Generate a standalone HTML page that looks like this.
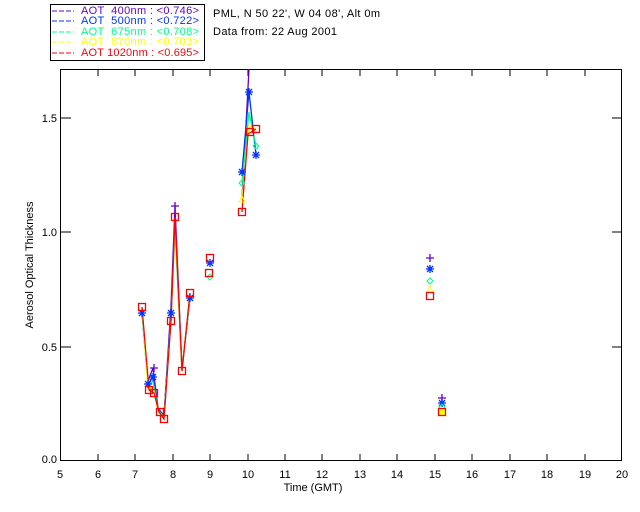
<!DOCTYPE html>
<html><head><style>
body{margin:0;background:#fff;width:640px;height:512px;overflow:hidden}
svg{display:block}
text{font-family:"Liberation Sans",sans-serif;font-size:11px;white-space:pre}
</style></head><body>
<svg width="640" height="512" viewBox="0 0 640 512">
<defs>
<g id="sq"><rect x="-3.5" y="-3.5" width="7" height="7" fill="none" stroke="#f00" stroke-width="1.3"/></g>
<g id="sqf"><rect x="-3.5" y="-3.5" width="7" height="7" fill="#ff0" stroke="#f00" stroke-width="1.3"/></g>
<g id="pl"><path d="M-4 0H4M0 -4V4" stroke="#60c" stroke-width="1.3"/></g>
<g id="st"><path d="M-4 0H4M0 -4V4M-3 -3L3 3M-3 3L3 -3" stroke="#03f" stroke-width="1.3"/></g>
<g id="di"><path d="M0 -3L3 0L0 3L-3 0Z" fill="none" stroke="#0f8" stroke-width="1"/></g>
<g id="tr"><path d="M0 -4L3 2H-3Z" fill="none" stroke="#ff0" stroke-width="1"/></g>
</defs>
<!-- legend -->
<rect x="50.5" y="4.5" width="154" height="56" fill="#fff" stroke="#000"/>
<g font-size="11">
<line x1="52" y1="11" x2="74" y2="11" stroke="#60c" stroke-dasharray="5,2"/><text x="81" y="14" fill="#60c" textLength="118" lengthAdjust="spacing">AOT  400nm : &lt;0.746&gt;</text>
<line x1="52" y1="21" x2="74" y2="21" stroke="#03f" stroke-dasharray="5,2"/><text x="81" y="24" fill="#03f" textLength="118" lengthAdjust="spacing">AOT  500nm : &lt;0.722&gt;</text>
<line x1="52" y1="32" x2="74" y2="32" stroke="#0f8" stroke-dasharray="5,2"/><text x="81" y="35" fill="#0f8" textLength="118" lengthAdjust="spacing">AOT  675nm : &lt;0.708&gt;</text>
<line x1="52" y1="42" x2="74" y2="42" stroke="#ff0" stroke-dasharray="5,2"/><text x="81" y="45" fill="#ff0" textLength="118" lengthAdjust="spacing">AOT  870nm : &lt;0.703&gt;</text>
<line x1="52" y1="53" x2="74" y2="53" stroke="#f00" stroke-dasharray="5,2"/><text x="81" y="56" fill="#f00" textLength="118" lengthAdjust="spacing">AOT 1020nm : &lt;0.695&gt;</text>
</g>
<text x="213" y="17" textLength="167" lengthAdjust="spacing">PML, N 50 22', W 04 08', Alt 0m</text>
<text x="213" y="35" textLength="124" lengthAdjust="spacing">Data from: 22 Aug 2001</text>
<!-- axes -->
<rect x="60.5" y="69.5" width="561" height="391" fill="none" stroke="#000"/>
<g stroke="#000">
<path d="M98 461v-7M135 461v-7M173 461v-7M210 461v-7M248 461v-7M285 461v-7M322 461v-7M360 461v-7M397 461v-7M435 461v-7M472 461v-7M510 461v-7M547 461v-7M585 461v-7"/>
<path d="M98 69v7M135 69v7M173 69v7M210 69v7M248 69v7M285 69v7M322 69v7M360 69v7M397 69v7M435 69v7M472 69v7M510 69v7M547 69v7M585 69v7"/>
<path d="M61 347h10M61 232h10M61 118h10M622 347h-10M622 232h-10M622 118h-10"/>
</g>
<g font-size="10" text-anchor="middle">
<text x="60" y="478">5</text><text x="98" y="478">6</text><text x="135" y="478">7</text><text x="173" y="478">8</text><text x="210" y="478">9</text><text x="248" y="478">10</text><text x="285" y="478">11</text><text x="322" y="478">12</text><text x="360" y="478">13</text><text x="397" y="478">14</text><text x="435" y="478">15</text><text x="472" y="478">16</text><text x="510" y="478">17</text><text x="547" y="478">18</text><text x="585" y="478">19</text><text x="622" y="478">20</text>
<text x="313" y="491">Time (GMT)</text>
</g>
<g font-size="10" text-anchor="end">
<text x="57" y="463">0.0</text><text x="57" y="351">0.5</text><text x="57" y="236">1.0</text><text x="57" y="122">1.5</text>
</g>
<text font-size="10" transform="translate(33,265) rotate(-90)" text-anchor="middle">Aerosol Optical Thickness</text>
<!-- series lines -->
<g fill="none" stroke-width="1.3">
<polyline stroke="#60c" points="142,312 148,381 153,368 158,408 164,416 171,306 175,206 182,369 190,297"/>
<polyline stroke="#60c" points="242,200 249,69"/>
<polyline stroke="#03f" points="142,313 148,384 153,377 158,410 164,415 171,313 175,222 182,370 190,298"/>
<polyline stroke="#03f" points="242,172 249,92 256,155"/>
<polyline stroke="#0f8" points="142,310 148,387 153,381 158,410 164,417 171,320 175,230 182,370 190,296"/>
<polyline stroke="#0f8" points="242,183 249,112 256,146"/>
<polyline stroke="#ff0" points="142,308 148,389 153,388 158,411 164,418 171,321 175,225 182,371 190,294"/>
<polyline stroke="#ff0" points="242,200 249,125 256,130"/>
<polyline stroke="#f00" points="142,307 149,390 154,393 159,412 164,419 171,321 175,217 182,371 190,293"/>
<polyline stroke="#f00" points="242,212 248,134 256,129"/>
</g>
<!-- markers -->
<use href="#pl" x="175" y="206"/><use href="#pl" x="154" y="368"/><use href="#pl" x="430" y="258"/><use href="#pl" x="442" y="398"/>
<use href="#st" x="142" y="313"/><use href="#st" x="148" y="384"/><use href="#st" x="153" y="377"/><use href="#st" x="171" y="313"/><use href="#st" x="190" y="298"/><use href="#st" x="210" y="263"/><use href="#st" x="242" y="172"/><use href="#st" x="249" y="92"/><use href="#st" x="256" y="155"/><use href="#st" x="430" y="269"/><use href="#st" x="442" y="403"/>
<use href="#di" x="242" y="183"/><use href="#di" x="256" y="146"/><use href="#di" x="430" y="281"/><use href="#di" x="442" y="407"/><use href="#di" x="210" y="277"/>
<use href="#tr" x="242" y="200"/><use href="#tr" x="430" y="290"/>
<use href="#sq" x="142" y="307"/><use href="#sq" x="149" y="390"/><use href="#sq" x="154" y="393"/><use href="#sq" x="160" y="412"/><use href="#sq" x="164" y="419"/><use href="#sq" x="171" y="321"/><use href="#sq" x="175" y="217"/><use href="#sq" x="182" y="371"/><use href="#sq" x="190" y="293"/><use href="#sq" x="210" y="258"/><use href="#sq" x="209" y="273"/><use href="#sq" x="242" y="212"/><use href="#sq" x="250" y="132"/><use href="#sq" x="256" y="129"/><use href="#sq" x="430" y="296"/><use href="#sqf" x="442" y="412"/>
</svg>
</body></html>
